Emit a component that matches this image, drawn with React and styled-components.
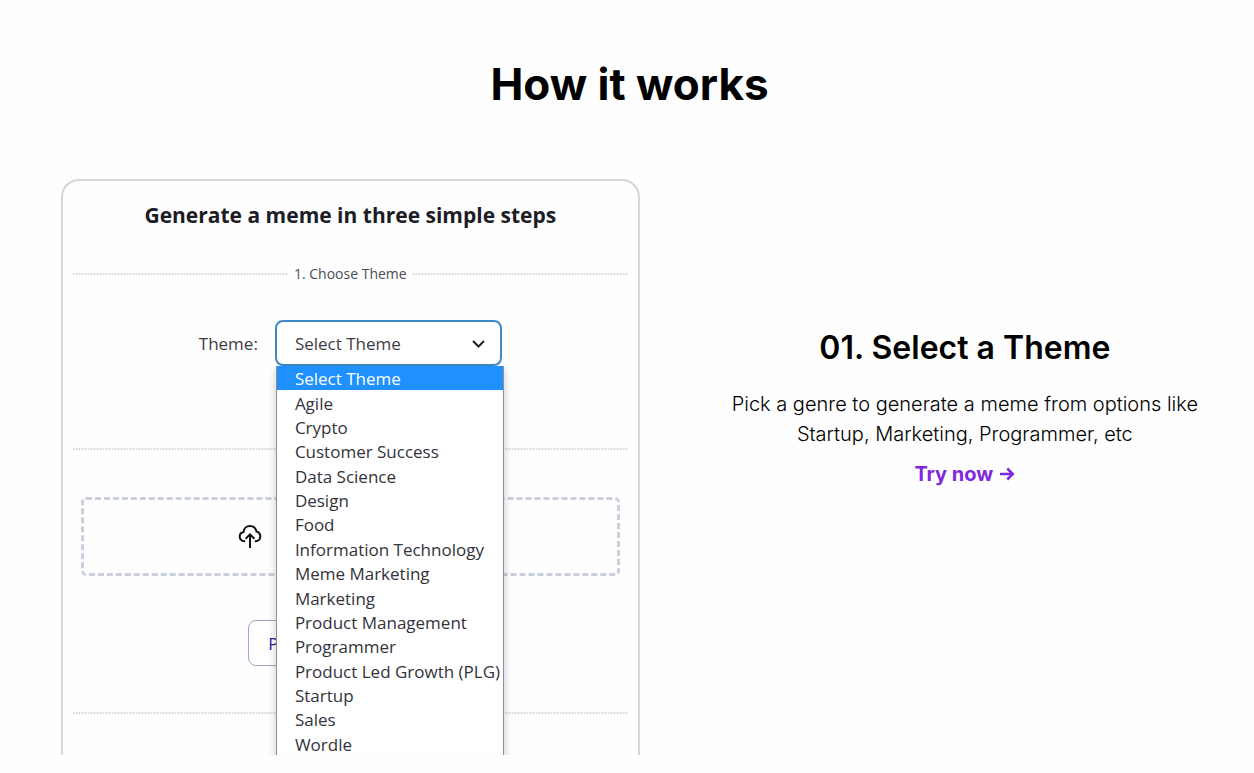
import React from "react";
import styled, { createGlobalStyle, css } from "styled-components";

const GlobalStyle = createGlobalStyle`
  *,
  *::before,
  *::after {
    box-sizing: border-box;
  }

  body {
    margin: 0;
    background: #fefefe;
    color: #000000;
    font-family: "Inter", sans-serif;
  }
`;

const uiFont = css`
  font-family: "Open Sans", "Noto Sans", sans-serif;
`;

const Section = styled.section`
  padding: 54px 36px 0 61px;
`;

const SectionTitle = styled.h2`
  margin: 0 0 65px;
  padding-right: 20px;
  font-size: 44px;
  line-height: 60px;
  font-weight: 700;
  text-align: center;
`;

const Columns = styled.div`
  display: grid;
  grid-template-columns: minmax(0, 8fr) minmax(0, 7fr);
  gap: 72px;
  align-items: start;
`;

const Preview = styled.div`
  ${uiFont}
  aspect-ratio: 578 / 575;
  overflow: hidden;
  padding: 20px 10px 0;
  border: 2px solid #d3d6da;
  border-bottom: 0;
  border-radius: 18px 18px 0 0;
`;

const PreviewTitle = styled.h3`
  margin: 0 0 33px;
  color: #1c1c26;
  font-size: 21px;
  line-height: 28px;
  font-weight: 700;
  text-align: center;
`;

const Divider = styled.div`
  display: flex;
  align-items: center;
  gap: 6px;
  height: 24px;
  color: #4c4c54;
  font-size: 14px;
  line-height: 24px;

  &::before,
  &::after {
    content: "";
    flex: 1;
    height: 2px;
    background: repeating-linear-gradient(
      to right,
      #d6d6dc 0 1px,
      #f0f0f3 1px 3px
    );
  }

  &:empty {
    gap: 0;
  }
`;

const Field = styled.div`
  display: flex;
  justify-content: center;
  align-items: center;
  gap: 17px;
  margin: 34px 0 71px;
  color: #3c3c44;
  font-size: 17px;
`;

const SelectBox = styled.div`
  position: relative;
  width: 227px;
`;

const Select = styled.select`
  ${uiFont}
  display: block;
  width: 100%;
  height: 46px;
  padding: 0 18px;
  appearance: none;
  background: #ffffff;
  border: 2px solid #3f88c5;
  border-radius: 8px;
  color: #3c3c44;
  font-size: 17px;
`;

const Chevron = styled.svg`
  position: absolute;
  top: 16px;
  right: 16px;
  width: 15px;
  height: 15px;
  pointer-events: none;
`;

const Menu = styled.ul`
  position: absolute;
  top: 100%;
  left: 1px;
  z-index: 1;
  display: grid;
  grid-template-columns: minmax(0, 1fr);
  grid-auto-rows: 1fr;
  width: 228px;
  height: 391px;
  margin: 0;
  padding: 0;
  list-style: none;
  background: #ffffff;
  border: 1px solid #8f8f99;
  border-top: 0;
  box-shadow: 0 4px 8px rgba(40, 40, 60, 0.25);
`;

const Option = styled.li`
  display: flex;
  align-items: center;
  padding: 2px 0 0 18px;
  background: ${(props) => (props.$active ? "#1e90ff" : "transparent")};
  color: ${(props) => (props.$active ? "#ffffff" : "#33333b")};
  font-size: 17px;
  line-height: 22px;
  white-space: nowrap;
`;

const DropZone = styled.div`
  display: flex;
  justify-content: center;
  align-items: center;
  height: 79px;
  margin: 36px 8px 44px;
  border: 3px dashed #cbd0de;
  border-radius: 5px;
`;

const DropContent = styled.div`
  width: 224px;
  display: flex;
`;

const ActionButton = styled.button`
  ${uiFont}
  display: block;
  width: 204px;
  height: 46px;
  margin: 0 auto 35px;
  padding: 0 19px;
  background: #ffffff;
  border: 1px solid #a3a3cf;
  border-radius: 8px;
  color: #2a1a9a;
  font-size: 17px;
  text-align: left;
`;

const Step = styled.div`
  padding-top: 148px;
  text-align: center;
`;

const StepTitle = styled.h3`
  margin: 0 0 20px;
  font-size: 32px;
  line-height: 42px;
  font-weight: 600;
`;

const StepText = styled.p`
  margin: 0 0 10px;
  font-size: 20px;
  line-height: 30px;
  font-weight: 300;
`;

const TryLink = styled.a`
  display: inline-flex;
  align-items: center;
  gap: 6px;
  color: #8128dd;
  font-size: 20px;
  line-height: 30px;
  font-weight: 700;
  text-decoration: none;
`;

const themes = [
  "Select Theme",
  "Agile",
  "Crypto",
  "Customer Success",
  "Data Science",
  "Design",
  "Food",
  "Information Technology",
  "Meme Marketing",
  "Marketing",
  "Product Management",
  "Programmer",
  "Product Led Growth (PLG)",
  "Startup",
  "Sales",
  "Wordle",
];

const CloudIcon = () => (
  <svg width="24" height="26" viewBox="0 0 24 26" fill="none" stroke="#111111" strokeWidth="2">
    <path d="M7.200 17.200H6.500C3.700 17.200 1.700 15.200 1.700 12.600C1.700 10.200 3.300 8.500 5.500 8.100C5.700 4.500 8.400 2 12 2C15.400 2 17.900 4.200 18.500 7.500C20.900 8.200 22.300 10.100 22.300 12.500C22.300 15.200 20.300 17.200 17.600 17.200H16.800" />
    <path d="M12 24V10.700M7.600 14.700L12 10.300L16.400 14.700" />
  </svg>
);

const ArrowIcon = () => (
  <svg width="16" height="16" viewBox="0 0 16 16" fill="none" stroke="currentColor" strokeWidth="2.500">
    <path d="M1 8H14M8.300 2.500L13.800 8L8.300 13.500" />
  </svg>
);

const MemeForm = () => (
  <Preview>
    <PreviewTitle>Generate a meme in three simple steps</PreviewTitle>
    <Divider>1. Choose Theme</Divider>
    <Field>
      <label htmlFor="theme">Theme:</label>
      <SelectBox>
        <Select id="theme" defaultValue="Select Theme">
          {themes.map((theme) => (
            <option key={theme}>{theme}</option>
          ))}
        </Select>
        <Chevron viewBox="0 0 15 15" fill="none" stroke="#222222" strokeWidth="2">
          <path d="M2 5L7.500 10.500L13 5" />
        </Chevron>
        <Menu role="listbox" aria-label="Theme">
          {themes.map((theme, index) => (
            <Option key={theme} role="option" aria-selected={index === 0} $active={index === 0}>
              {theme}
            </Option>
          ))}
        </Menu>
      </SelectBox>
    </Field>
    <Divider />
    <DropZone>
      <DropContent>
        <CloudIcon />
      </DropContent>
    </DropZone>
    <ActionButton type="button">P</ActionButton>
    <Divider />
  </Preview>
);

const App = () => {
  return (
    <>
      <GlobalStyle />
      <Section>
        <SectionTitle>How it works</SectionTitle>
        <Columns>
          <MemeForm />
          <Step>
            <StepTitle>01. Select a Theme</StepTitle>
            <StepText>
              Pick a genre to generate a meme from options like Startup,
              Marketing, Programmer, etc
            </StepText>
            <TryLink href="#try">
              Try now <ArrowIcon />
            </TryLink>
          </Step>
        </Columns>
      </Section>
    </>
  );
};

export default App;
